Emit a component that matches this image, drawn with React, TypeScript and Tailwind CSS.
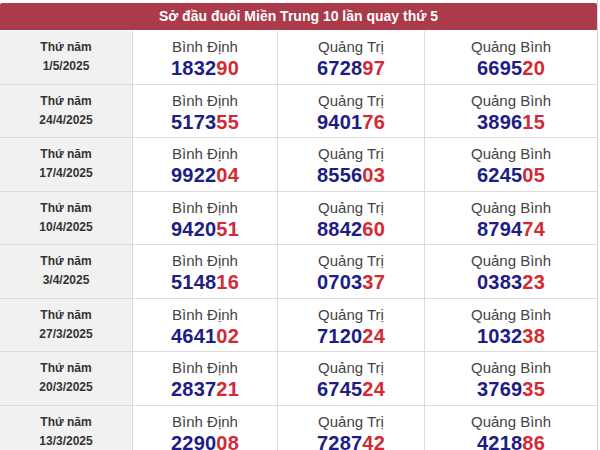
import React from "react";

const rows: { day: string; date: string; nums: [string, string, string] }[] = [
  { day: "Thứ năm", date: "1/5/2025", nums: ["183290", "672897", "669520"] },
  { day: "Thứ năm", date: "24/4/2025", nums: ["517355", "940176", "389615"] },
  { day: "Thứ năm", date: "17/4/2025", nums: ["992204", "855603", "624505"] },
  { day: "Thứ năm", date: "10/4/2025", nums: ["942051", "884260", "879474"] },
  { day: "Thứ năm", date: "3/4/2025", nums: ["514816", "070337", "038323"] },
  { day: "Thứ năm", date: "27/3/2025", nums: ["464102", "712024", "103238"] },
  { day: "Thứ năm", date: "20/3/2025", nums: ["283721", "674524", "376935"] },
  { day: "Thứ năm", date: "13/3/2025", nums: ["229008", "728742", "421886"] },
];

const provinces = ["Bình Định", "Quảng Trị", "Quảng Bình"];

function Num({ v }: { v: string }) {
  return (
    <div className="text-[20px] font-bold leading-[22px] tracking-[0.2px]">
      <span className="text-[#1d1d85]">{v.slice(0, 4)}</span>
      <span className="text-[#d42a33]">{v.slice(4)}</span>
    </div>
  );
}

export default function App() {
  return (
    <div
      className="w-[600px] h-[450px] overflow-hidden bg-white"
      style={{ fontFamily: '"Liberation Sans", Arial, sans-serif' }}
    >
      <div className="w-[598px] pt-[3px] border-r border-[#d4d4d4]">
        <div className="h-[27px] bg-[#ab3a4a] rounded-t-[2px] flex items-center justify-center text-white text-[14px] font-bold">
          Sở đầu đuôi Miền Trung 10 lần quay thứ 5
        </div>
        <div className="h-px bg-white" />
        {rows.map((r, i) => (
          <div
            key={i}
            className="grid grid-cols-[133px_145px_147px_1fr] h-[53.5px] border-b border-[#dcdcdc]"
          >
            <div className="bg-[#f1f1f1] border-r border-[#dcdcdc] flex flex-col items-center justify-center text-[12px] font-bold text-[#333] leading-[19px]">
              <div>{r.day}</div>
              <div>{r.date}</div>
            </div>
            {r.nums.map((n, j) => (
              <div
                key={j}
                className={`flex flex-col items-center justify-center pt-[3px] ${j < 2 ? "border-r border-[#dcdcdc]" : ""}`}
              >
                <div className="text-[15px] text-[#444] leading-[18px] mb-[1px]">{provinces[j]}</div>
                <Num v={n} />
              </div>
            ))}
          </div>
        ))}
      </div>
    </div>
  );
}
